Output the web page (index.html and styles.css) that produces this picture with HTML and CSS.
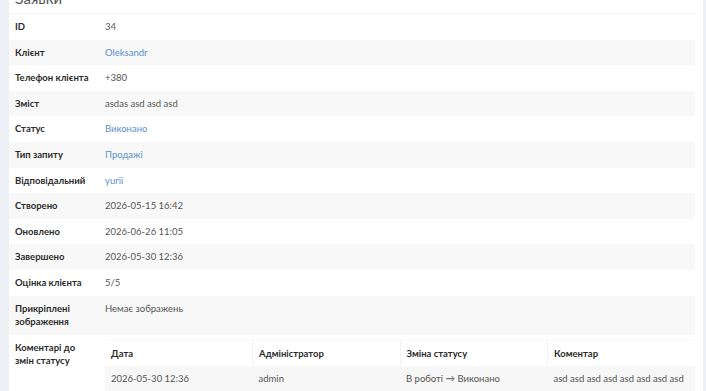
FILE: index.html
```html
<!DOCTYPE html>
<html lang="uk">
<head>
<meta charset="utf-8">
<title>Заявка</title>
<link rel="stylesheet" href="styles.css">
</head>
<body>
<div class="page">
  <div class="card">
    <h2 class="card-title">Заявки</h2>
    <table class="details">
      <tr><th>ID</th><td>34</td></tr>
      <tr><th>Клієнт</th><td><a href="#">Oleksandr</a></td></tr>
      <tr><th>Телефон клієнта</th><td>+380</td></tr>
      <tr><th>Зміст</th><td>asdas asd asd asd</td></tr>
      <tr><th>Статус</th><td><a href="#">Виконано</a></td></tr>
      <tr><th>Тип запиту</th><td><a href="#">Продажі</a></td></tr>
      <tr><th>Відповідальний</th><td><a href="#">yurii</a></td></tr>
      <tr><th>Створено</th><td>2026-05-15 16:42</td></tr>
      <tr><th>Оновлено</th><td>2026-06-26 11:05</td></tr>
      <tr><th>Завершено</th><td>2026-05-30 12:36</td></tr>
      <tr><th>Оцінка клієнта</th><td>5/5</td></tr>
      <tr><th>Прикріплені зображення</th><td>Немає зображень</td></tr>
      <tr>
        <th>Коментарі до змін статусу</th>
        <td class="nested-cell">
          <table class="history">
            <thead>
              <tr><th>Дата</th><th>Адміністратор</th><th>Зміна статусу</th><th>Коментар</th></tr>
            </thead>
            <tbody>
              <tr><td>2026-05-30 12:36</td><td>admin</td><td>В роботі → Виконано</td><td>asd asd asd asd asd asd asd asd</td></tr>
            </tbody>
          </table>
        </td>
      </tr>
    </table>
  </div>
</div>
</body>
</html>
```
FILE: styles.css
```css
html, body {
  margin: 0;
  padding: 0;
  background: #edf0f4;
  font-family: Lato, "Noto Sans", sans-serif;
  font-size: 9.5px;
  color: #555;
}
.page {
  padding: 0 3px 0 9px;
}
.card {
  background: #fff;
  padding: 0 8px 0 0;
  min-height: 391px;
}
.card-title {
  margin: -11px 0 6px 0;
  padding-left: 6px;
  font-size: 15px;
  line-height: 18px;
  font-weight: 400;
  color: #555;
}
.details {
  width: 100%;
  border-collapse: collapse;
  border-top: 1px solid #f4f4f4;
}
.details > tbody > tr > th,
.details > tbody > tr > td {
  padding: 6px;
  line-height: 13.6px;
  text-align: left;
  vertical-align: top;
}
.details > tbody > tr > th {
  width: 78px;
  font-weight: 700;
  color: #2b2b2b;
}
.details > tbody > tr:nth-child(even) {
  background: #f8f8f8;
}
.details a {
  color: #5b90c8;
  text-decoration: none;
}
.details > tbody > tr > td.nested-cell {
  padding-right: 0;
}
.history {
  width: 100%;
  border-collapse: collapse;
  table-layout: fixed;
  box-shadow: 0 -1px 2px rgba(0, 0, 0, 0.03);
}
.history th,
.history td {
  padding: 6px;
  line-height: 13px;
  text-align: left;
  white-space: nowrap;
}
.history thead th {
  background: #fff;
  font-weight: 700;
  color: #2b2b2b;
  border-left: 1px solid #f3f3f3;
}
.history thead th:first-child {
  border-left: none;
}
.history tbody td {
  background: #f7f7f7;
  color: #555;
}
```
